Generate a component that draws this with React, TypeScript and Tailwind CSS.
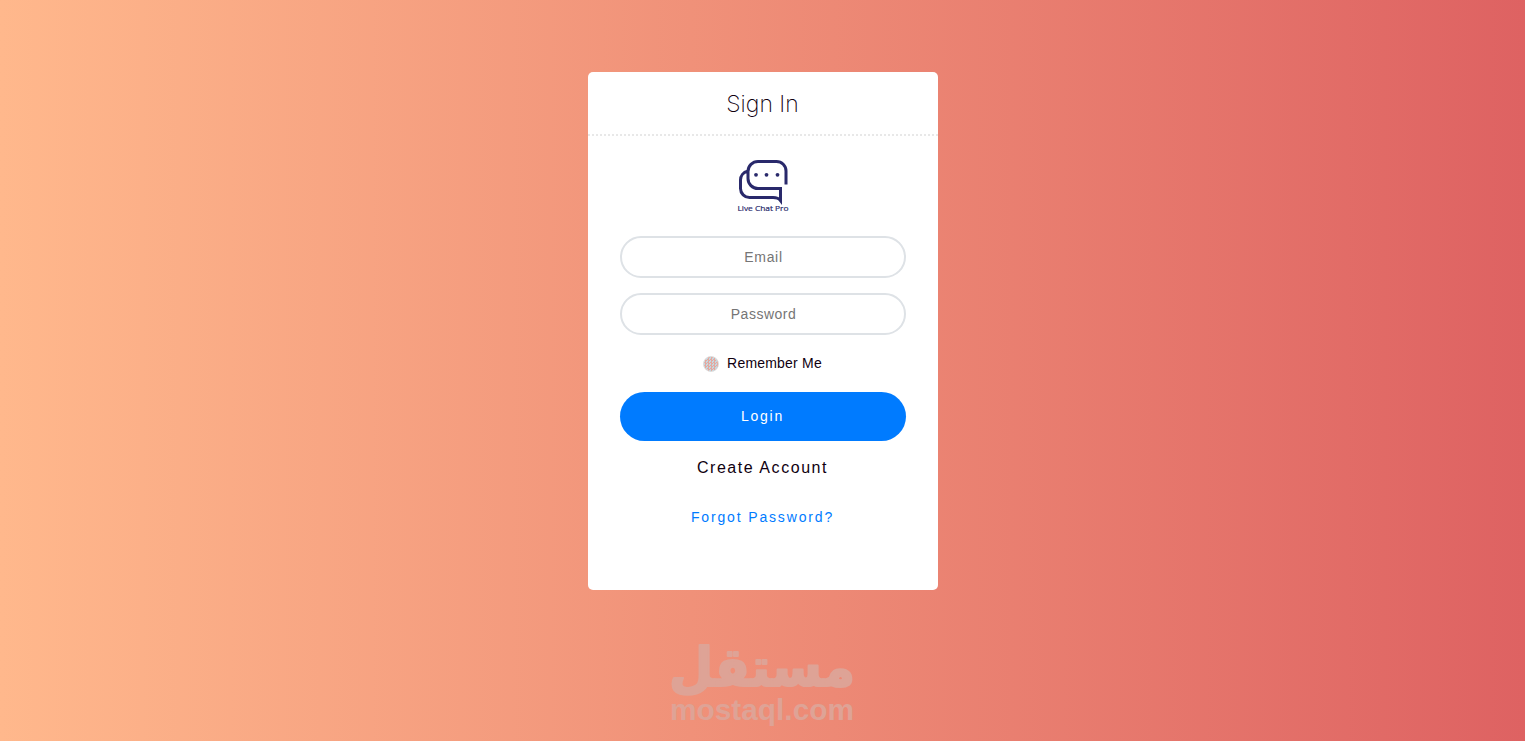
import type { FormEvent } from "react";
import { useState } from "react";

function ChatLogo() {
  return (
    <svg
      width="60"
      height="60"
      viewBox="0 0 60 60"
      fill="none"
      stroke="#29296b"
      strokeWidth="3"
      className="mx-auto block"
    >
      <path d="M53 31.500V18A9.500 9.500 0 0 0 43.500 8.500H25A10 10 0 0 0 15 18.500V25.500A10 10 0 0 0 25 35.500H47.500V47.500C46 45.500 43 44.500 40 44.500H16.500A9 9 0 0 1 7.500 35.500V27A9 9 0 0 1 14.500 18.300" />
      <g fill="#29296b" stroke="none">
        <circle cx="23" cy="21.8" r="1.9" />
        <circle cx="33.5" cy="21.8" r="1.9" />
        <circle cx="44.5" cy="21.8" r="1.9" />
        <text
          x="4.5"
          y="58"
          fontSize="8"
          textLength="51"
          lengthAdjust="spacingAndGlyphs"
          stroke="#29296b"
          strokeWidth="0.2"
          style={{ fontFamily: '"Open Sans", sans-serif' }}
        >
          Live Chat Pro
        </text>
      </g>
    </svg>
  );
}

function Watermark() {
  return (
    <svg
      width="210"
      height="103"
      viewBox="-10 -10 210 103"
      fill="#dea396"
      className="pointer-events-none absolute top-[628px] left-[658px] overflow-visible"
    >
      <text
        transform="translate(94 47.5) scale(1.06 1.12)"
        textAnchor="middle"
        direction="rtl"
        fontSize="48"
        fontWeight="700"
        stroke="#dea396"
        strokeWidth="2"
        strokeLinejoin="round"
        style={{ fontFamily: '"DejaVu Sans", sans-serif' }}
      >
        مستقل
      </text>
      <text
        x="2"
        y="82"
        fontSize="30"
        fontWeight="700"
        textLength="184"
        lengthAdjust="spacingAndGlyphs"
        style={{ fontFamily: '"Liberation Sans", Arial, sans-serif' }}
      >
        mostaql.com
      </text>
    </svg>
  );
}

const inputClass =
  "block h-[42px] w-full rounded-full border-2 border-[#dee2e6] bg-white pl-0.5 text-center text-sm text-[#212529] outline-none placeholder:text-[#757575]";

export default function App() {
  const [email, setEmail] = useState("");
  const [password, setPassword] = useState("");
  const [remember, setRemember] = useState(false);

  const handleSubmit = (event: FormEvent<HTMLFormElement>) => {
    event.preventDefault();
  };

  return (
    <main className="relative h-screen overflow-hidden bg-[linear-gradient(to_right,#ffb88c,#de6262)] pt-[72px] font-['Liberation_Sans',Arial,sans-serif]">
      <section className="mx-auto h-[518px] w-[350px] rounded-[5px] bg-white">
        <header className="flex h-16 items-center justify-center border-b-2 border-dotted border-[#e8e8e8] pt-0.5">
          <h1 className="font-['Inter',sans-serif] text-[23px] font-extralight text-[#100010]">
            Sign In
          </h1>
        </header>

        <form onSubmit={handleSubmit} className="px-8 pt-[17px] text-center">
          <ChatLogo />

          <input
            type="email"
            placeholder="Email"
            value={email}
            onChange={(event) => setEmail(event.target.value)}
            className={`mt-[23px] tracking-[0.7px] ${inputClass}`}
          />
          <input
            type="password"
            placeholder="Password"
            value={password}
            onChange={(event) => setPassword(event.target.value)}
            className={`mt-[15px] tracking-[0.5px] ${inputClass}`}
          />

          <label className="mt-[18px] flex h-5 items-center justify-center gap-2 text-sm tracking-[0.2px] text-[#100010]">
            <input
              type="checkbox"
              checked={remember}
              onChange={(event) => setRemember(event.target.checked)}
              className="mt-0.5 size-4 appearance-none rounded-full border border-[#dcdcdc] bg-[repeating-conic-gradient(#e5a89f_0_25%,#c3d8e0_0_50%)] bg-size-[3px_3px] checked:bg-[#007bff] checked:bg-none"
            />
            Remember Me
          </label>

          <button
            type="submit"
            className="mt-[19px] block h-[49px] w-full rounded-full bg-[#007bff] pb-0.5 text-sm tracking-[1.7px] text-white"
          >
            Login
          </button>

          <a
            href="#create"
            className="mt-[15px] block text-base leading-6 tracking-[1.55px] text-[#100010]"
          >
            Create Account
          </a>
          <a
            href="#forgot"
            className="mt-[27px] block text-sm leading-5 tracking-[1.85px] text-[#007bff]"
          >
            Forgot Password?
          </a>
        </form>
      </section>

      <Watermark />
    </main>
  );
}
